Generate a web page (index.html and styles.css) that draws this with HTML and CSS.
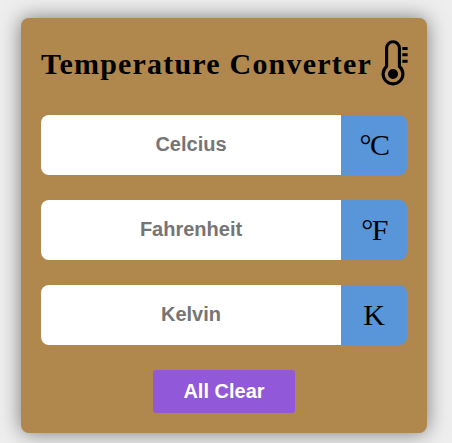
FILE: index.html
```html
<!DOCTYPE html>
<html lang="en">
<head>
<meta charset="utf-8">
<title>Temperature Converter</title>
<link rel="stylesheet" href="styles.css">
</head>
<body>
<main class="card">
  <header class="header">
    <h1 class="title">Temperature Converter</h1>
    <svg class="thermo" viewBox="0 0 28 48" aria-hidden="true">
      <path d="M6.6 26.45V8.1a6.4 6.4 0 0 1 12.8 0v18.35a9.9 9.9 0 1 1-12.8 0z" fill="none" stroke="#000" stroke-width="3.1"/>
      <circle cx="13" cy="34" r="5" fill="#000"/>
      <path d="M22.3 7h5.3v3h-5.3zM22.3 13.2h5.3v3h-5.3zM22.3 19.7h5.3v3h-5.3z" fill="#000"/>
    </svg>
  </header>
  <div class="field"><input class="input" type="number" placeholder="Celcius"><span class="unit unit-degree">°C</span></div>
  <div class="field"><input class="input" type="number" placeholder="Fahrenheit"><span class="unit unit-degree">°F</span></div>
  <div class="field"><input class="input" type="number" placeholder="Kelvin"><span class="unit">K</span></div>
  <button class="clear" type="button">All Clear</button>
</main>
</body>
</html>
```
FILE: styles.css
```css
* { box-sizing: border-box; }
body {
  margin: 0;
  height: 443px;
  padding: 18px 25px 10px 21px;
  overflow: hidden;
  background: #eee;
  font-family: "Liberation Serif", serif;
}
.card {
  height: 415px;
  padding: 20px;
  border-radius: 8px;
  background: #b0874c;
  box-shadow: 0 0 20px rgba(0, 0, 0, 0.5);
  display: flex;
  flex-direction: column;
  align-items: center;
}
.header {
  width: 100%;
  height: 52px;
  margin-bottom: 25px;
  display: flex;
  align-items: center;
}
.title {
  margin: 0;
  width: 339px;
  flex: none;
  font-size: 30px;
  line-height: 36px;
  letter-spacing: 1.2px;
  white-space: nowrap;
}
.thermo { width: 28px; height: 48px; flex: none; }
.field {
  display: flex;
  width: 366px;
  height: 60px;
  margin-bottom: 25px;
}
.input {
  width: 300px;
  padding: 0 0 2px 15px;
  border: 0;
  border-radius: 8px 0 0 8px;
  background: #fff;
  text-align: center;
  font: bold 20px "Liberation Sans", sans-serif;
  appearance: textfield;
}
.input::placeholder { color: #757575; }
.unit {
  width: 66px;
  display: flex;
  align-items: center;
  justify-content: center;
  border-radius: 0 8px 8px 0;
  background: #5895d9;
  font-size: 30px;
}
.unit-degree { letter-spacing: -1.5px; }
.clear {
  width: 142px;
  height: 43px;
  padding: 0;
  border: 0;
  border-radius: 3px;
  background: #9158d9;
  color: #fff;
  font: bold 20px "Liberation Sans", sans-serif;
}
```
